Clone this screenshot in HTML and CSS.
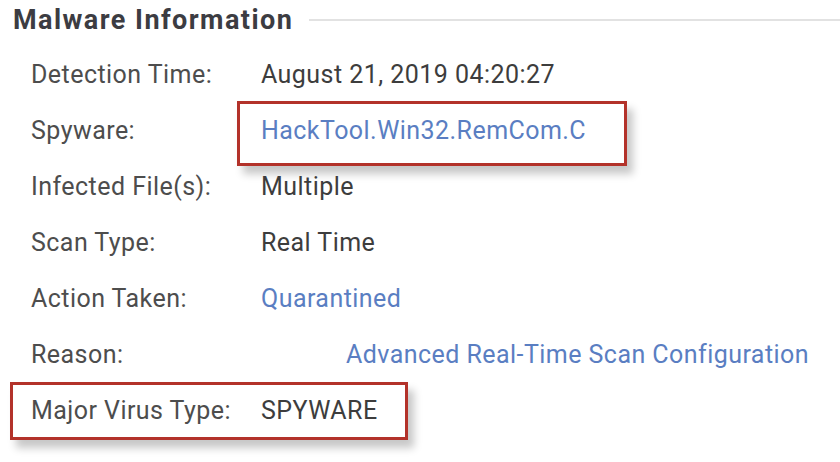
FILE: index.html
```html
<!DOCTYPE html>
<html>
<head>
<meta charset="utf-8">
<link rel="stylesheet" href="styles.css">
</head>
<body>
<div class="panel">
  <div class="title-row">
    <h2 class="title">Malware Information</h2>
    <div class="rule"></div>
  </div>
  <div class="rows">
    <div class="row"><span class="label">Detection Time:</span><span class="value">August 21, 2019 04:20:27</span></div>
    <div class="row"><span class="label">Spyware:</span><span class="value link">HackTool.Win32.RemCom.C</span>
      <div class="callout callout-spyware"></div></div>
    <div class="row"><span class="label">Infected File(s):</span><span class="value">Multiple</span></div>
    <div class="row"><span class="label">Scan Type:</span><span class="value">Real Time</span></div>
    <div class="row"><span class="label">Action Taken:</span><span class="value link">Quarantined</span></div>
    <div class="row"><span class="label">Reason:</span><span class="value link indent">Advanced Real-Time Scan Configuration</span></div>
    <div class="row"><span class="label">Major Virus Type:</span><span class="value">SPYWARE</span>
      <div class="callout callout-major"></div></div>
  </div>
</div>
</body>
</html>
```
FILE: styles.css
```css
html, body {
  margin: 0;
  padding: 0;
  background: #ffffff;
}
body {
  width: 840px;
  height: 462px;
  overflow: hidden;
  font-family: Roboto, "Liberation Sans", sans-serif;
}
.panel {
  padding: 0 0 0 13px;
}
.title-row {
  display: flex;
  align-items: center;
  gap: 16px;
  height: 40px;
}
.title {
  margin: 0;
  font-size: 27px;
  font-weight: 700;
  color: #3c3c42;
  line-height: 40px;
  letter-spacing: 1.45px;
  white-space: nowrap;
}
.rule {
  flex: 1;
  height: 2px;
  background: #e2e2e2;
}
.rows {
  padding: 6px 0 0 18px;
}
.row {
  position: relative;
  display: flex;
  height: 56px;
  align-items: center;
  font-size: 25px;
  letter-spacing: 0.45px;
}
.label {
  width: 230px;
  color: #4d4d4d;
  white-space: nowrap;
}
.value {
  color: #3d3d3d;
  white-space: nowrap;
}
.link {
  color: #5a7ec2;
}
.indent {
  margin-left: 85px;
}
.callout {
  position: absolute;
  border: 3px solid #b3322a;
  box-shadow: 6px 8px 8px rgba(0, 0, 0, 0.22);
}
.callout-spyware {
  left: 206px;
  top: -1px;
  width: 384px;
  height: 59px;
}
.callout-major {
  left: -21px;
  top: 0px;
  width: 392px;
  height: 52px;
}
```
